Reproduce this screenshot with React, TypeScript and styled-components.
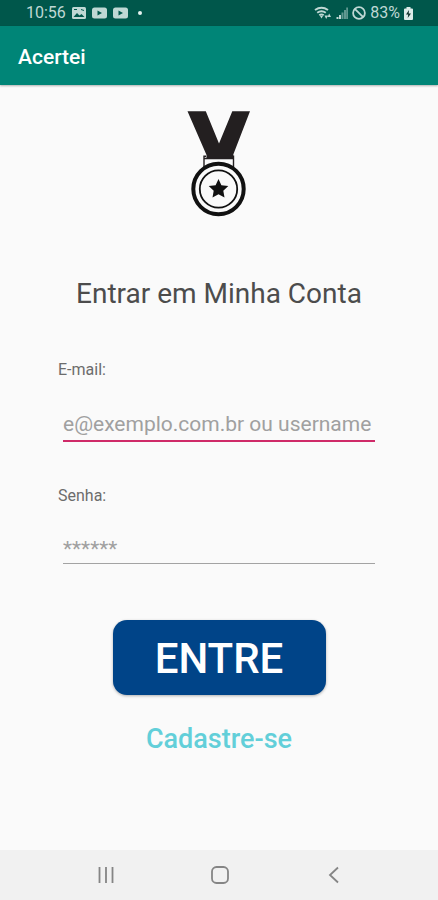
import React, { useState } from 'react'
import styled, { createGlobalStyle } from 'styled-components'

const color = {
  Status: '#00574b',
  Primary: '#008577',
  Background: '#fafafa',
  Nav: '#f1f1f1',
  Accent: '#cf2a68',
  Line: '#a3a3a3',
  Hint: '#a0a0a0',
  Label: '#6c6c6c',
  Heading: '#4c4c4c',
  Navy: '#004488',
  Cyan: '#62cfd9',
  StatusIcon: '#bfd8d4',
}

export default function App() {
  const [email, setEmail] = useState('')
  const [password, setPassword] = useState('')

  return (
    <>
      <GlobalStyle />
      <Screen>
        <StatusBar>
          <StatusGroup>
            <span>10:56</span>
            <PictureIcon />
            <VideoIcon />
            <VideoIcon />
            <Dot />
          </StatusGroup>
          <StatusGroup $tight>
            <WifiIcon />
            <SignalIcon />
            <BlockedIcon />
            <span>83%</span>
            <BatteryIcon />
          </StatusGroup>
        </StatusBar>

        <AppBar>
          <AppName>Acertei</AppName>
        </AppBar>

        <Content>
          <Medal />
          <Heading>Entrar em Minha Conta</Heading>
          <Form onSubmit={ev => ev.preventDefault()}>
            <Label htmlFor="email">E-mail:</Label>
            <Input
              id="email"
              type="text"
              $active
              placeholder="e@exemplo.com.br ou username"
              value={email}
              onChange={ev => setEmail(ev.currentTarget.value)}
            />
            <Label htmlFor="password">Senha:</Label>
            <Input
              id="password"
              type="password"
              placeholder="******"
              value={password}
              onChange={ev => setPassword(ev.currentTarget.value)}
            />
            <SubmitButton type="submit">ENTRE</SubmitButton>
          </Form>
          <SignUpLink href="#cadastro">Cadastre-se</SignUpLink>
        </Content>

        <NavBar>
          <NavButton type="button" aria-label="Recentes">
            <svg width="20" height="20" viewBox="0 0 20 20">
              <path d="M3.500 2v16M10 2v16M16.500 2v16" />
            </svg>
          </NavButton>
          <NavButton type="button" aria-label="Início">
            <svg width="20" height="20" viewBox="0 0 20 20">
              <rect x="2" y="2" width="16" height="16" rx="4.5" />
            </svg>
          </NavButton>
          <NavButton type="button" aria-label="Voltar">
            <svg width="20" height="20" viewBox="0 0 20 20">
              <path d="M14 2.5L6 10l8 7.5" />
            </svg>
          </NavButton>
        </NavBar>
      </Screen>
    </>
  )
}

function PictureIcon() {
  return (
    <svg width="14" height="14" viewBox="0 0 14 14">
      <rect x="0" y="1" width="14" height="12" rx="1.5" fill={color.StatusIcon} />
      <path d="M1.5 11l3.5-4 2.5 2.5 2-1.5 3 3z" fill={color.Status} />
      <path d="M2 3.5h3M9 3.5l3 1" stroke={color.Status} />
    </svg>
  )
}

function VideoIcon() {
  return (
    <svg width="15" height="12" viewBox="0 0 15 12">
      <rect x="0" y="0.5" width="15" height="11" rx="2.5" fill={color.StatusIcon} />
      <path d="M5.5 3.5L10 6l-4.5 2.5z" fill={color.Status} />
    </svg>
  )
}

function WifiIcon() {
  return (
    <svg width="18" height="14" viewBox="0 0 18 14">
      <g fill="none" stroke={color.StatusIcon} strokeWidth="2">
        <path d="M1 4q6.5-4.500 13 0" />
        <path d="M3.2 6.800q4.300-3 8.600 0" />
        <path d="M5.300 9.300q2.200-1.600 4.400 0" />
      </g>
      <path d="M6 10h3l-1.500 2.500z" fill={color.StatusIcon} />
      <path d="M10.5 9.500H14L12.200 13zM13.500 11l1.700-3.500L17 11z" fill={color.StatusIcon} />
    </svg>
  )
}

function SignalIcon() {
  return (
    <svg width="12" height="12" viewBox="0 0 12 12">
      <path d="M1.500 12v-2M4 12V8" stroke={color.StatusIcon} strokeWidth="2" />
      <path
        d="M6.500 12V5.500M9 12V3M11.200 12V.5"
        stroke={color.StatusIcon}
        strokeWidth="2"
        opacity="0.5"
      />
    </svg>
  )
}

function BlockedIcon() {
  return (
    <svg width="14" height="14" viewBox="0 0 14 14">
      <g fill="none" stroke={color.StatusIcon} strokeWidth="1.800">
        <circle cx="7" cy="7" r="5.900" />
        <path d="M2.800 2.800l8.400 8.400" />
      </g>
    </svg>
  )
}

function BatteryIcon() {
  return (
    <svg width="9" height="13" viewBox="0 0 9 13">
      <path
        d="M2.500 0h4v1.500H8a1 1 0 0 1 1 1V12a1 1 0 0 1-1 1H1a1 1 0 0 1-1-1V2.500a1 1 0 0 1 1-1h1.500z"
        fill="#dcebe8"
      />
      <path d="M5 3L2 7.500h2.200L3.700 11 7 6.500H4.700z" fill="#10302b" />
    </svg>
  )
}

function Medal() {
  return (
    <svg width="64" height="108" viewBox="0 0 64 108" role="img" aria-label="Medalha">
      <path
        d="M.5 1.300h18.300L32 33.500 45.300 1.300H63L46.300 44.500V48.500H19.500V45z"
        fill="#231f20"
      />
      <path
        d="M19 46.200H17V57M45 46.200h1.500V57M17 48.500h29.500"
        fill="none"
        stroke="#231f20"
        strokeWidth="1.400"
      />
      <circle cx="31.500" cy="79" r="25.200" fill="#fafafa" stroke="#111" strokeWidth="4" />
      <circle cx="31.500" cy="79" r="18.700" fill="none" stroke="#111" strokeWidth="1.800" />
      <path
        d="M31.500 69l2.900 6.200 6.900.9-5 4.700 1.200 6.800-6-3.300-6 3.300 1.200-6.800-5-4.700 6.900-.9z"
        fill="#111"
      />
    </svg>
  )
}

const GlobalStyle = createGlobalStyle`
  * {
    box-sizing: border-box;
  }

  body {
    margin: 0;
    background-color: ${color.Background};
    font-family: Roboto, "Liberation Sans", sans-serif;
  }
`

const Screen = styled.div`
  display: flex;
  flex-flow: column;
  min-height: 100vh;
`

const StatusBar = styled.div`
  display: flex;
  justify-content: space-between;
  align-items: center;
  height: 26px;
  padding: 0 25px 0 26px;
  color: ${color.StatusIcon};
  background-color: ${color.Status};
  font-size: 16px;
  line-height: 26px;
`

const StatusGroup = styled.div<{ $tight?: boolean }>`
  display: flex;
  align-items: center;
  gap: ${props => (props.$tight ? 4 : 6)}px;
`

const Dot = styled.i`
  width: 4px;
  height: 4px;
  margin-left: 4px;
  border-radius: 50%;
  background-color: #e6f2f0;
`

const AppBar = styled.header`
  display: flex;
  align-items: center;
  height: 59px;
  padding: 2px 18px 0;
  background-color: ${color.Primary};
  box-shadow: 0 1px 2px rgba(0, 0, 0, 0.3);
`

const AppName = styled.div`
  color: #fff;
  font-size: 21px;
  font-weight: 500;
`

const Content = styled.main`
  display: flex;
  flex: 1 1 auto;
  flex-flow: column;
  align-items: center;
  padding: 25px 58px;
`

const Heading = styled.h1`
  margin: 58px 0 0;
  color: ${color.Heading};
  font-size: 28px;
  font-weight: 400;
  line-height: 36px;
  white-space: nowrap;
`

const Form = styled.form`
  display: flex;
  flex-flow: column;
  align-self: stretch;
  margin-top: 48px;
`

const Label = styled.label`
  color: ${color.Label};
  font-size: 16px;
  line-height: 20px;
`

const Input = styled.input<{ $active?: boolean }>`
  height: ${props => (props.$active ? 36 : 32)}px;
  margin: 26px 5px 44px;
  border: none;
  border-bottom: solid ${props => (props.$active ? `2px ${color.Accent}` : `1px ${color.Line}`)};
  border-radius: 0;
  padding: 2px 0 0;
  color: ${color.Heading};
  background: none;
  font-family: inherit;
  font-size: 21px;
  outline: none;

  &::placeholder {
    color: ${color.Hint};
    opacity: 1;
  }
`

const SubmitButton = styled.button`
  align-self: center;
  width: 213px;
  height: 75px;
  margin-top: 12px;
  border: none;
  border-radius: 14px;
  padding: 2px 0 0;
  color: #fff;
  background-color: ${color.Navy};
  box-shadow: 0 1px 3px rgba(0, 0, 0, 0.3);
  font-family: inherit;
  font-size: 42px;
  font-weight: 500;
`

const SignUpLink = styled.a`
  margin-top: 26px;
  color: ${color.Cyan};
  font-size: 27px;
  font-weight: 500;
  line-height: 36px;
  text-decoration: none;
`

const NavBar = styled.nav`
  display: flex;
  justify-content: space-around;
  align-items: center;
  height: 50px;
  padding: 0 47px 0 49px;
  background-color: ${color.Nav};
`

const NavButton = styled.button`
  display: flex;
  justify-content: center;
  align-items: center;
  width: 48px;
  height: 48px;
  border: none;
  padding: 0;
  background: none;

  svg {
    fill: none;
    stroke: #858585;
    stroke-width: 1.8;
  }
`
